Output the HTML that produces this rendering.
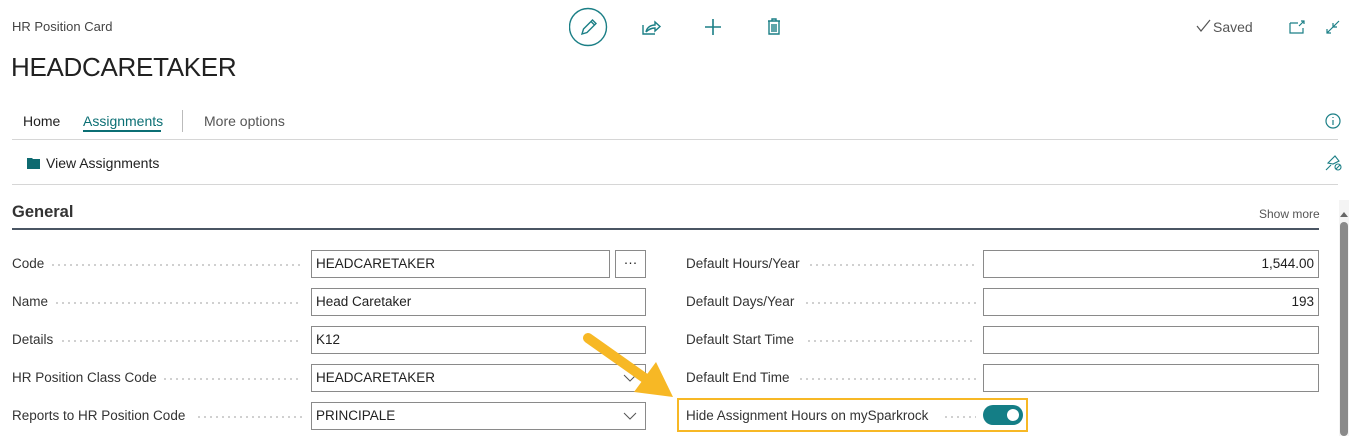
<!DOCTYPE html><html><head><style>
body{margin:0;width:1361px;height:436px;background:#fff;font-family:"Liberation Sans",sans-serif;color:#212121;position:relative;overflow:hidden}
.a{position:absolute}
.lbl{position:absolute;font-size:13.5px;color:#333;display:flex;align-items:center}
.dots{position:absolute;height:2px;background-image:radial-gradient(circle,#c4c4c4 0.9px,transparent 1.1px);background-size:6px 2px}
.in{position:absolute;border:1px solid #8a8a8a;height:28px;box-sizing:border-box;font-size:13.5px;line-height:26px;padding:0 4px;color:#212121}
.t{color:#0b6f74}
</style></head><body>
<div class="a" style="left:12px;top:19px;font-size:13px;color:#444">HR Position Card</div>
<div class="a" style="left:11px;top:52px;font-size:26px;letter-spacing:-0.3px;color:#212121">HEADCARETAKER</div>
<svg class="a" style="left:569px;top:7px" width="220" height="40" fill="none" stroke="#1b7f86" stroke-width="1.4">
<circle cx="19" cy="20" r="18.5"/>
<path d="M13 27l1.5-5 9-9 3.5 3.5-9 9z M22 14.5l3.5 3.5"/>
<path d="M74 18v9h12M77 25c1-5 5-7 9-7v-3l5 4.5-5 4.5v-3c-3 0-6 1-9 4"/>
<path d="M144 12v16M136 20h16" stroke-width="1.6"/>
<path d="M199 14h12M203 14v-2h4v2M200 14v13h10v-13M203 17v8M205 17v8M207 17v8"/>
</svg>
<svg class="a" style="left:1196px;top:18px" width="16" height="16" fill="none" stroke="#555" stroke-width="1.2"><path d="M1 8l4 5 9-11"/></svg>
<div class="a" style="left:1213px;top:19px;font-size:14px;color:#555">Saved</div>
<svg class="a" style="left:1288px;top:18px;" width="60" height="20" fill="none" stroke="#1b7f86" stroke-width="1.2"><path d="M2 5h8M2 5v10h13v-5M11 8l5-5M13 3h3v3"/><path d="M39 15l6-6M39 11v4h4M51 3l-6 6M45 5v4h4"/></svg>
<div class="a" style="left:23px;top:113px;font-size:14px">Home</div>
<div class="a t" style="left:83px;top:113px;font-size:14px">Assignments</div>
<div class="a" style="left:83px;top:130px;width:78px;height:2px;background:#0b6f74"></div>
<div class="a" style="left:182px;top:110px;width:1px;height:22px;background:#bbb"></div>
<div class="a" style="left:204px;top:113px;font-size:14px;color:#555">More options</div>
<svg class="a" style="left:1324px;top:112px" width="18" height="18" fill="none" stroke="#1b7f86" stroke-width="1.2"><circle cx="9" cy="9" r="7"/><path d="M9 8v5M9 5v1"/></svg>
<div class="a" style="left:12px;top:139px;width:1326px;height:1px;background:#d6d6d6"></div>
<svg class="a" style="left:27px;top:156px" width="16" height="14"><path d="M0 2h5l1 1h7v10H0z" fill="#0e6a70"/></svg>
<div class="a" style="left:46px;top:155px;font-size:14px">View Assignments</div>
<svg class="a" style="left:1324px;top:154px" width="18" height="18" fill="none" stroke="#1b7f86" stroke-width="1.1"><path d="M2 16l5-5M4 9l7-7 4 5-6 3zM11 13a3 3 0 1 0 6 0a3 3 0 1 0-6 0M12 15l4-4"/></svg>
<div class="a" style="left:12px;top:184px;width:1326px;height:1px;background:#d6d6d6"></div>
<div class="a" style="left:12px;top:203px;font-size:16.5px;font-weight:bold;color:#333">General</div>
<div class="a" style="left:1259px;top:207px;font-size:12px;color:#555">Show more</div>
<div class="a" style="left:12px;top:228px;width:1307px;height:2px;background:#4a5563"></div>
<div class="a" style="left:1339px;top:200px;width:10px;height:236px;background:#f4f4f4"></div>
<div class="a" style="left:1340px;top:212px;width:0;height:0;border:4px solid transparent;border-bottom:5px solid #666;border-top:0"></div>
<div class="a" style="left:1340px;top:222px;width:8px;height:214px;background:#8a8a8a;border-radius:4px"></div>

<div class="lbl" style="left:12px;top:256px">Code</div><div class="dots" style="left:50px;width:252px;top:264px"></div>
<div class="in" style="left:311px;top:250px;width:299px">HEADCARETAKER</div>
<div class="in" style="left:615px;top:250px;width:31px;text-align:center;line-height:24px">···</div>
<div class="lbl" style="left:12px;top:294px">Name</div><div class="dots" style="left:54px;width:248px;top:302px"></div>
<div class="in" style="left:311px;top:288px;width:335px">Head Caretaker</div>
<div class="lbl" style="left:12px;top:332px">Details</div><div class="dots" style="left:60px;width:242px;top:340px"></div>
<div class="in" style="left:311px;top:326px;width:335px">K12</div>
<div class="lbl" style="left:12px;top:370px">HR Position Class Code</div><div class="dots" style="left:162px;width:140px;top:378px"></div>
<div class="in" style="left:311px;top:364px;width:335px">HEADCARETAKER</div>
<div class="lbl" style="left:12px;top:408px">Reports to HR Position Code</div><div class="dots" style="left:196px;width:106px;top:416px"></div>
<div class="in" style="left:311px;top:402px;width:335px">PRINCIPALE</div>
<svg class="a" style="left:622px;top:372px" width="16" height="60" fill="none" stroke="#555"><path d="M2 3l6 6 6-6M2 41l6 6 6-6"/></svg>

<div class="lbl" style="left:686px;top:256px">Default Hours/Year</div><div class="dots" style="left:808px;width:168px;top:264px"></div>
<div class="in" style="left:983px;top:250px;width:336px;text-align:right">1,544.00</div>
<div class="lbl" style="left:686px;top:294px">Default Days/Year</div><div class="dots" style="left:804px;width:172px;top:302px"></div>
<div class="in" style="left:983px;top:288px;width:336px;text-align:right">193</div>
<div class="lbl" style="left:686px;top:332px">Default Start Time</div><div class="dots" style="left:806px;width:170px;top:340px"></div>
<div class="in" style="left:983px;top:326px;width:336px"></div>
<div class="lbl" style="left:686px;top:370px">Default End Time</div><div class="dots" style="left:798px;width:178px;top:378px"></div>
<div class="in" style="left:983px;top:364px;width:336px"></div>
<div class="a" style="left:677px;top:398px;width:351px;height:34px;border:2px solid #f7b825;box-sizing:border-box"></div>
<div class="lbl" style="left:686px;top:408px">Hide Assignment Hours on mySparkrock</div><div class="dots" style="left:943px;width:33px;top:416px"></div>
<div class="a" style="left:983px;top:405px;width:40px;height:20px;border-radius:10px;background:#147e86"></div>
<div class="a" style="left:1007px;top:409px;width:12px;height:12px;border-radius:6px;background:#fff"></div>
<svg class="a" style="left:580px;top:328px" width="100" height="75"><path d="M8 10L66 51" stroke="#f7b825" stroke-width="10" stroke-linecap="round"/><path d="M54 64L93 69 76 34z" fill="#f7b825"/></svg>
</body></html>
